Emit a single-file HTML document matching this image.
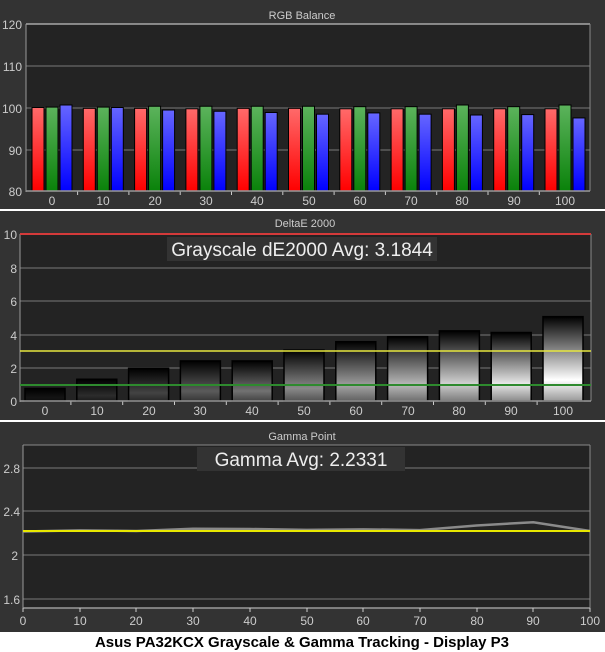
<!DOCTYPE html>
<html><head><meta charset="utf-8"><style>
html,body{margin:0;padding:0;background:#fff;}
svg{display:block;}
text{font-family:"Liberation Sans",sans-serif;}
</style></head><body>
<svg id="s" width="605" height="652" viewBox="0 0 605 652" xmlns="http://www.w3.org/2000/svg">
<defs>
<linearGradient id="gr" x1="0" y1="0" x2="0" y2="1"><stop offset="0" stop-color="#ff6a6a"/><stop offset="1" stop-color="#ff0000"/></linearGradient>
<linearGradient id="gg" x1="0" y1="0" x2="0" y2="1"><stop offset="0" stop-color="#5cb35c"/><stop offset="1" stop-color="#0a820a"/></linearGradient>
<linearGradient id="gb" x1="0" y1="0" x2="0" y2="1"><stop offset="0" stop-color="#6666ff"/><stop offset="1" stop-color="#0000ff"/></linearGradient>
</defs>
<rect x="0" y="0" width="605" height="632" fill="#333"/>
<!-- Panel 1 -->
<rect x="26" y="24" width="564" height="167" fill="#232323"/>
<line x1="26" y1="24" x2="590" y2="24" stroke="#a8a8a8" stroke-width="1.5"/>
<line x1="26" y1="66" x2="590" y2="66" stroke="#7a7a7a"/>
<line x1="26" y1="108" x2="590" y2="108" stroke="#7a7a7a"/>
<line x1="26" y1="150" x2="590" y2="150" stroke="#7a7a7a"/>
<line x1="590" y1="24" x2="590" y2="191" stroke="#888"/>
<line x1="26" y1="24" x2="26" y2="192" stroke="#999"/>
<g id="p1bars"></g>
<line x1="26" y1="191" x2="590" y2="191" stroke="#999" stroke-width="1.5"/>
<g fill="#ccc" font-size="12">
<text x="302" y="19" text-anchor="middle" font-size="11">RGB Balance</text>
<text x="22" y="29" text-anchor="end">120</text>
<text x="22" y="71" text-anchor="end">110</text>
<text x="22" y="113" text-anchor="end">100</text>
<text x="22" y="155" text-anchor="end">90</text>
<text x="22" y="196" text-anchor="end">80</text>
</g>
<g id="p1x" fill="#ccc" font-size="12" text-anchor="middle"></g>
<line x1="0" y1="210" x2="605" y2="210" stroke="#fff" stroke-width="2"/>
<!-- Panel 2 -->
<rect x="20" y="234" width="571" height="167" fill="#232323"/>
<line x1="20" y1="268" x2="591" y2="268" stroke="#7a7a7a"/>
<line x1="20" y1="301" x2="591" y2="301" stroke="#7a7a7a"/>
<line x1="20" y1="335" x2="591" y2="335" stroke="#7a7a7a"/>
<line x1="20" y1="368" x2="591" y2="368" stroke="#7a7a7a"/>
<line x1="591" y1="234" x2="591" y2="401" stroke="#888"/>
<line x1="20" y1="234" x2="20" y2="402" stroke="#999"/>
<rect x="167" y="237" width="270" height="24" fill="#333"/>
<text x="302" y="256" text-anchor="middle" fill="#eee" font-size="19">Grayscale dE2000 Avg: 3.1844</text>
<g id="p2bars"></g>
<line x1="20" y1="234" x2="591" y2="234" stroke="#d43a3a" stroke-width="2"/>
<line x1="20" y1="401" x2="591" y2="401" stroke="#999" stroke-width="1.5"/>
<g fill="#ccc" font-size="12">
<text x="305" y="227" text-anchor="middle" font-size="11">DeltaE 2000</text>
<text x="17" y="239" text-anchor="end">10</text>
<text x="17" y="273" text-anchor="end">8</text>
<text x="17" y="306" text-anchor="end">6</text>
<text x="17" y="340" text-anchor="end">4</text>
<text x="17" y="373" text-anchor="end">2</text>
<text x="17" y="406" text-anchor="end">0</text>
</g>
<g id="p2x" fill="#ccc" font-size="12" text-anchor="middle"></g>
<line x1="0" y1="421" x2="605" y2="421" stroke="#fff" stroke-width="2"/>
<!-- Panel 3 -->
<rect x="23" y="445" width="567" height="163" fill="#232323"/>
<line x1="23" y1="445" x2="590" y2="445" stroke="#888"/>
<line x1="23" y1="468" x2="590" y2="468" stroke="#7a7a7a"/>
<line x1="23" y1="511" x2="590" y2="511" stroke="#7a7a7a"/>
<line x1="23" y1="555" x2="590" y2="555" stroke="#7a7a7a"/>
<line x1="23" y1="599" x2="590" y2="599" stroke="#7a7a7a"/>
<line x1="590" y1="445" x2="590" y2="608" stroke="#888"/>
<line x1="23" y1="445" x2="23" y2="608" stroke="#999"/>
<line x1="23" y1="608" x2="590" y2="608" stroke="#999" stroke-width="1.5"/>
<rect x="197" y="447" width="208" height="24" fill="#333"/>
<text x="301" y="466" text-anchor="middle" fill="#eee" font-size="19">Gamma Avg: 2.2331</text>
<polyline id="gl" fill="none" stroke="#8a8a8a" stroke-width="2.5" points=""/>
<line x1="23" y1="531" x2="590" y2="531" stroke="#e8e800" stroke-width="2"/>
<g fill="#ccc" font-size="12">
<text x="302" y="440" text-anchor="middle" font-size="11">Gamma Point</text>
<text x="20" y="473" text-anchor="end">2.8</text>
<text x="20" y="516" text-anchor="end">2.4</text>
<text x="18" y="560" text-anchor="end">2</text>
<text x="20" y="604" text-anchor="end">1.6</text>
</g>
<g id="p3x" fill="#ccc" font-size="12" text-anchor="middle"></g>
<rect x="0" y="632" width="605" height="20" fill="#fff"/>
<text x="302" y="647" text-anchor="middle" fill="#000" font-size="15" font-weight="bold">Asus PA32KCX Grayscale &amp; Gamma Tracking - Display P3</text>
<text id="xl" display="none"></text>
</svg>
<script>
var NS="http://www.w3.org/2000/svg";
function el(p,t,a){var e=document.createElementNS(NS,t);for(var k in a)e.setAttribute(k,a[k]);document.getElementById(p).appendChild(e);return e;}
var labs=["0","10","20","30","40","50","60","70","80","90","100"];
// Panel1
var rgb=[[100,100.1,100.6],[99.8,100.1,100],[99.8,100.3,99.4],[99.7,100.3,99.1],[99.8,100.3,98.8],[99.8,100.3,98.4],[99.7,100.2,98.7],[99.7,100.2,98.4],[99.7,100.6,98.2],[99.7,100.2,98.3],[99.7,100.6,97.5]];
var fills=["url(#gr)","url(#gg)","url(#gb)"];
for(var i=0;i<11;i++){var c=52+51.3*i;
 for(var j=0;j<3;j++){var y=191-(rgb[i][j]-80)*4.175;
  el("p1bars","rect",{x:c-20+j*14,y:y,width:12,height:191-y,fill:fills[j],stroke:"#000","stroke-width":1});}
 if(i<10)el("p1bars","line",{x1:c+25.6,y1:191,x2:c+25.6,y2:195,stroke:"#ccc"});
}
// Panel2
var de=[0.75,1.3,1.95,2.4,2.4,3.05,3.55,3.85,4.2,4.1,5.05];
for(var i=0;i<11;i++){var c=45+51.8*i;var y=401-de[i]*16.7;
 var v=Math.round(20+i*23.5);var top=Math.min(255,v+20);
 var gid="d"+i;var g=el("p2bars","linearGradient",{id:gid,x1:0,y1:0,x2:0,y2:1});
 var s1=document.createElementNS(NS,"stop");s1.setAttribute("offset","0");s1.setAttribute("stop-color","rgb("+top+","+top+","+top+")");g.appendChild(s1);
 var s2=document.createElementNS(NS,"stop");s2.setAttribute("offset","0.75");s2.setAttribute("stop-color","rgb("+v+","+v+","+v+")");g.appendChild(s2);
 var s3=document.createElementNS(NS,"stop");s3.setAttribute("offset","1");s3.setAttribute("stop-color","rgb("+Math.round(v*0.6)+","+Math.round(v*0.6)+","+Math.round(v*0.6)+")");g.appendChild(s3);
 el("p2bars","rect",{x:c-20,y:y,width:40,height:401-y,fill:"url(#"+gid+")",stroke:"#000","stroke-width":1.5});
 if(i<10)el("p2bars","line",{x1:c+25.9,y1:401,x2:c+25.9,y2:405,stroke:"#ccc"});
}
el("p2bars","line",{x1:20,y1:351,x2:591,y2:351,stroke:"#e8e840","stroke-width":1.5});
el("p2bars","line",{x1:20,y1:385,x2:591,y2:385,stroke:"#2e8a2e","stroke-width":2});
// Panel3
var gm=[2.215,2.225,2.22,2.24,2.238,2.23,2.235,2.228,2.27,2.30,2.22];
var pts=[];for(var i=0;i<11;i++){var x=23+56.7*i;pts.push(x+","+(555-(gm[i]-2)*109.3));}
document.getElementById("gl").setAttribute("points",pts.join(" "));
</script>
<svg width="0" height="0" style="position:absolute"></svg>
<style>#p1x,#p2x,#p3x{}</style>
<div style="position:absolute;left:0;top:0;width:605px;height:652px;pointer-events:none;">
<svg width="605" height="652" xmlns="http://www.w3.org/2000/svg" style="position:absolute;left:0;top:0;">
<g fill="#ccc" font-size="12" text-anchor="middle" font-family="Liberation Sans, sans-serif">
<text x="52" y="205">0</text><text x="103" y="205">10</text><text x="155" y="205">20</text><text x="206" y="205">30</text><text x="257" y="205">40</text><text x="309" y="205">50</text><text x="360" y="205">60</text><text x="411" y="205">70</text><text x="462" y="205">80</text><text x="514" y="205">90</text><text x="565" y="205">100</text>
<text x="45" y="415">0</text><text x="97" y="415">10</text><text x="149" y="415">20</text><text x="200" y="415">30</text><text x="252" y="415">40</text><text x="304" y="415">50</text><text x="356" y="415">60</text><text x="408" y="415">70</text><text x="459" y="415">80</text><text x="511" y="415">90</text><text x="563" y="415">100</text>
<text x="23" y="625">0</text><text x="80" y="625">10</text><text x="136" y="625">20</text><text x="193" y="625">30</text><text x="250" y="625">40</text><text x="307" y="625">50</text><text x="363" y="625">60</text><text x="420" y="625">70</text><text x="477" y="625">80</text><text x="533" y="625">90</text><text x="590" y="625">100</text>
</g>
<g stroke="#ccc">
<line x1="80" y1="608" x2="80" y2="612"/><line x1="136" y1="608" x2="136" y2="612"/><line x1="193" y1="608" x2="193" y2="612"/><line x1="250" y1="608" x2="250" y2="612"/><line x1="307" y1="608" x2="307" y2="612"/><line x1="363" y1="608" x2="363" y2="612"/><line x1="420" y1="608" x2="420" y2="612"/><line x1="477" y1="608" x2="477" y2="612"/><line x1="533" y1="608" x2="533" y2="612"/><line x1="23" y1="608" x2="23" y2="612"/><line x1="590" y1="608" x2="590" y2="612"/>
</g>
</svg>
</div>
</body></html>
